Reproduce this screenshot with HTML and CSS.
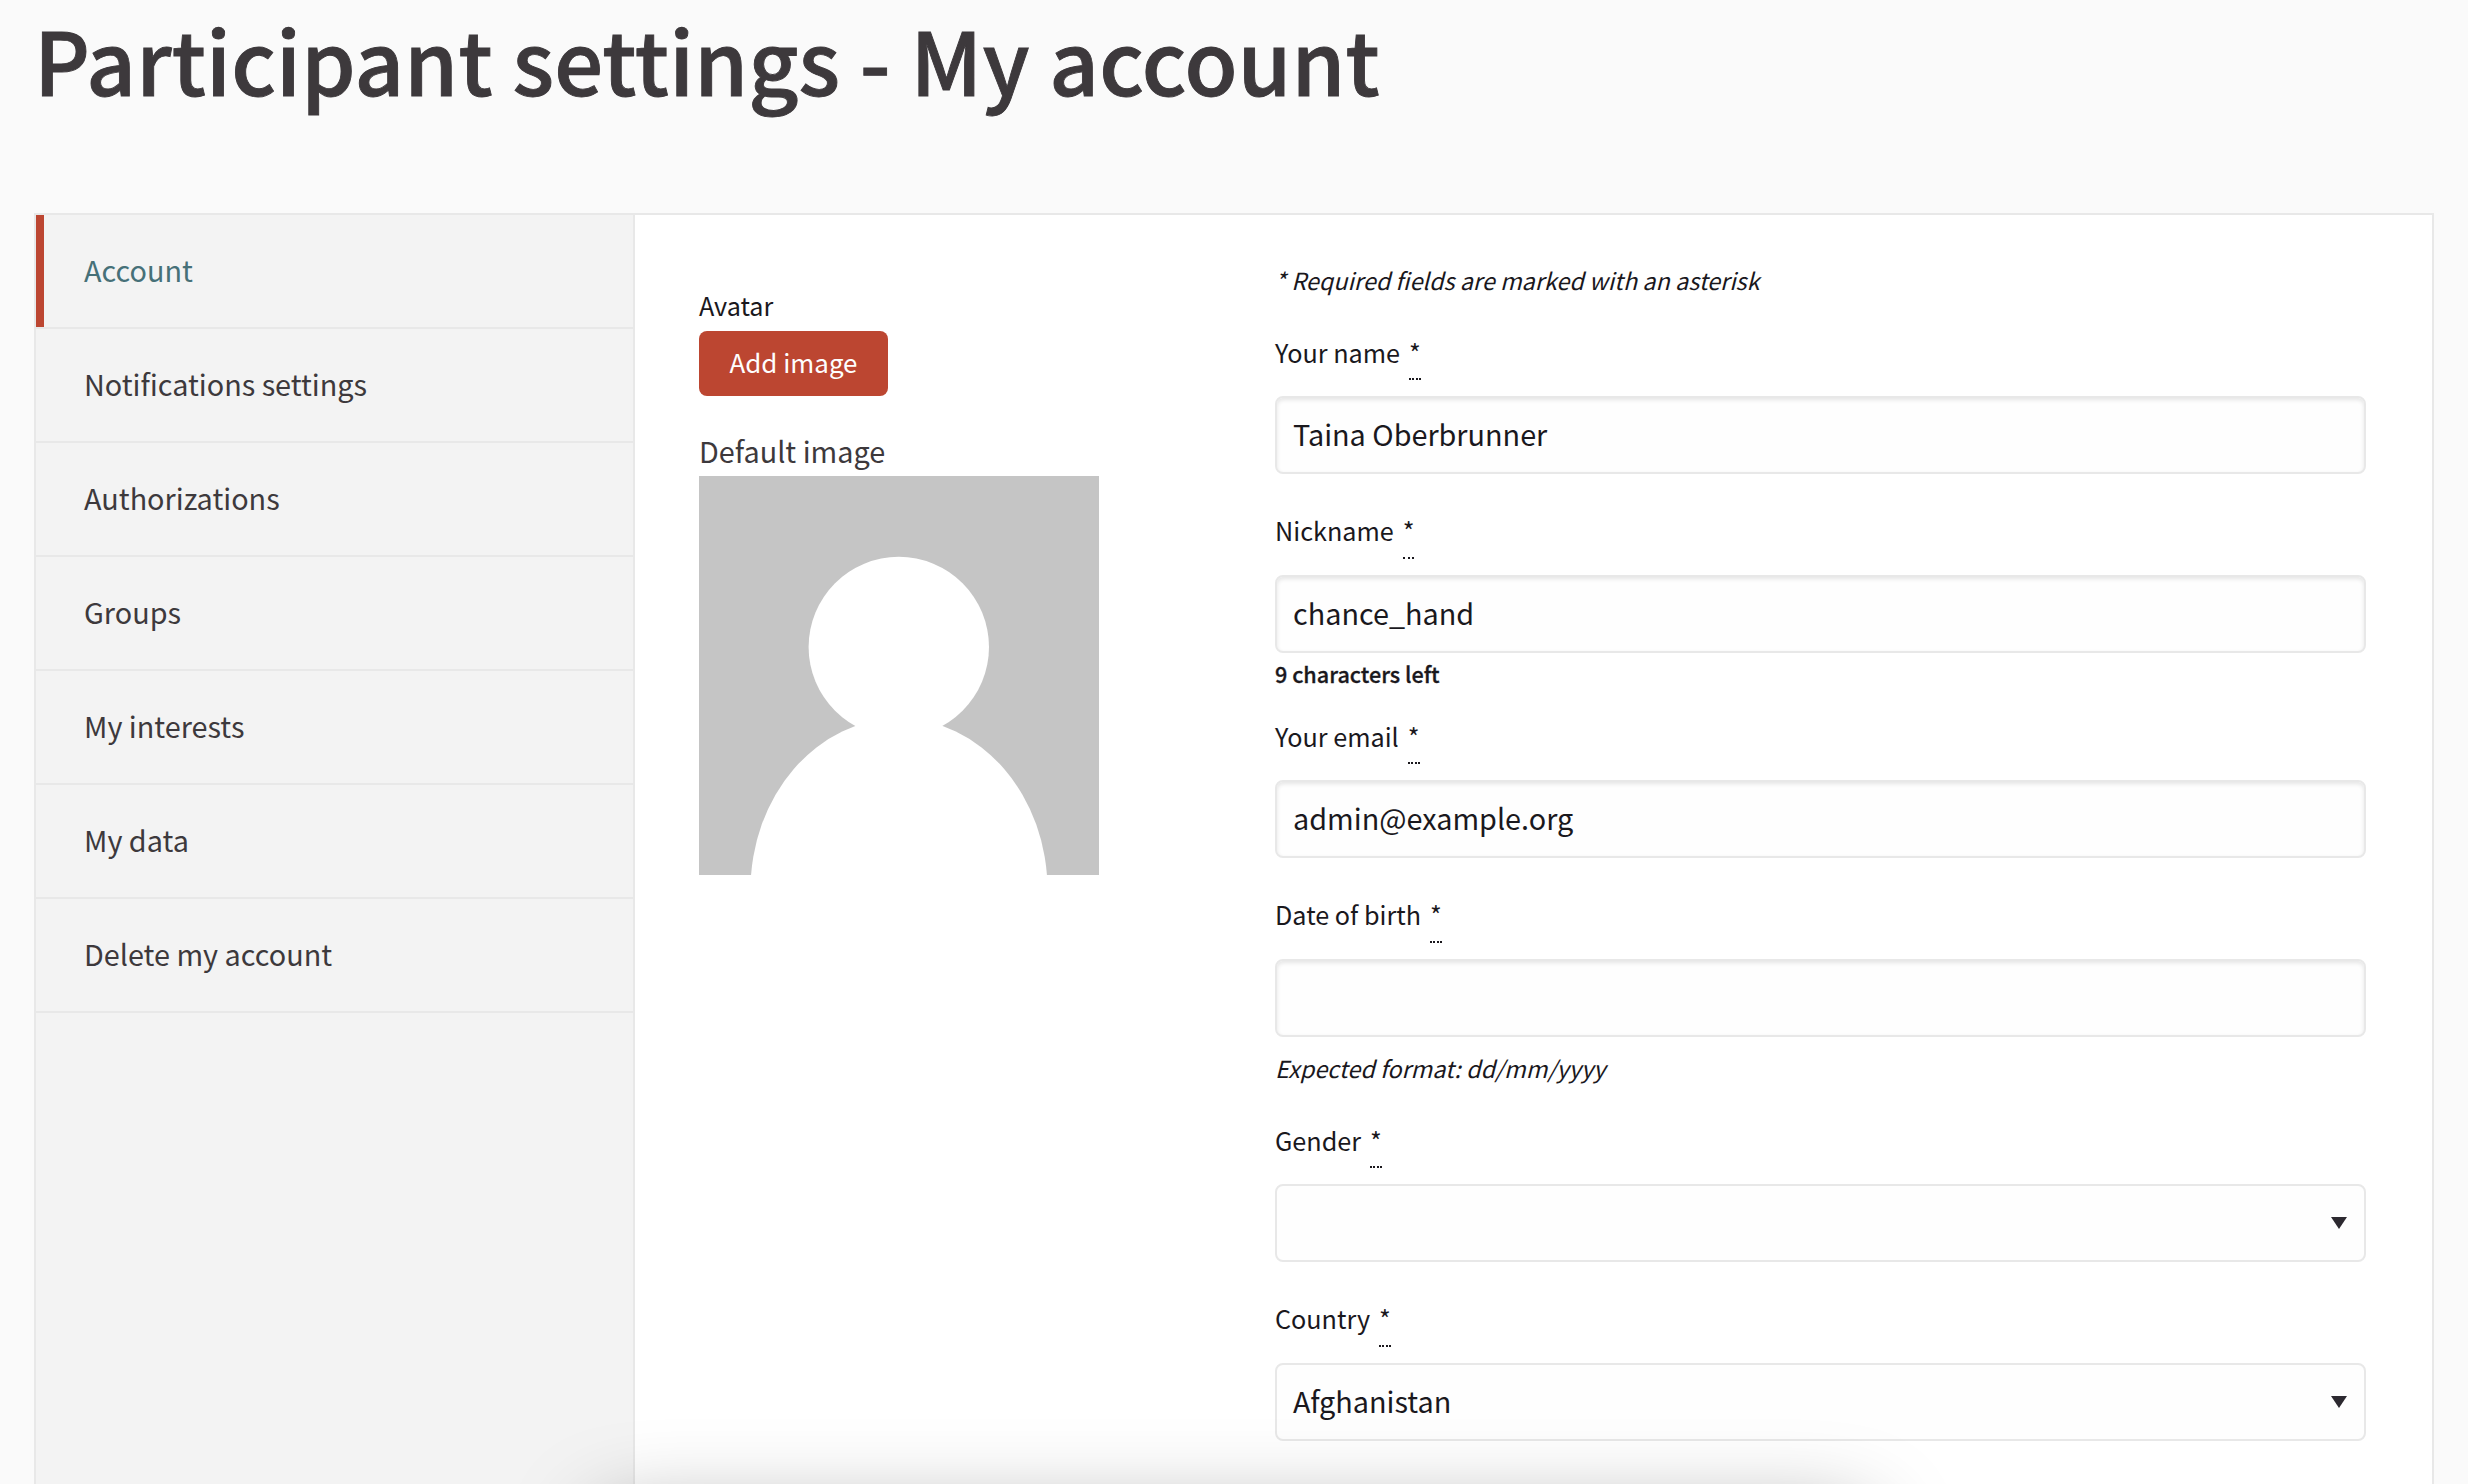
FILE: index.html
```html
<!DOCTYPE html>
<html lang="en">
<head>
<meta charset="utf-8">
<title>Participant settings - My account</title>
<link rel="stylesheet" href="styles.css">
</head>
<body>
<header class="page-header">
  <h1 class="page-title">Participant settings - My account</h1>
</header>
<main class="panel">
  <nav class="side-nav">
    <a class="side-link is-active">Account</a>
    <a class="side-link">Notifications settings</a>
    <a class="side-link">Authorizations</a>
    <a class="side-link">Groups</a>
    <a class="side-link">My interests</a>
    <a class="side-link">My data</a>
    <a class="side-link">Delete my account</a>
  </nav>
  <div class="content">
    <section class="avatar">
      <span class="avatar-label">Avatar</span>
      <button class="button" type="button">Add image</button>
      <span class="avatar-caption">Default image</span>
      <svg class="avatar-image" viewBox="0 0 400 399">
        <rect width="400" height="399" fill="#c5c5c5"/>
        <circle cx="199.8" cy="171" r="90.2" fill="#fff"/>
        <ellipse cx="200" cy="414" rx="148.5" ry="171.5" fill="#fff"/>
      </svg>
    </section>
    <form class="form">
      <p class="required-note">* Required fields are marked with an asterisk</p>
      <div class="field">
        <label class="label label-low" for="name">Your name <abbr class="mark">*</abbr></label>
        <input class="input" id="name" type="text" value="Taina Oberbrunner">
      </div>
      <div class="field field-counted">
        <label class="label" for="nick">Nickname <abbr class="mark">*</abbr></label>
        <input class="input" id="nick" type="text" value="chance_hand">
        <p class="counter">9 characters left</p>
      </div>
      <div class="field">
        <label class="label label-low" for="email">Your email <abbr class="mark">*</abbr></label>
        <input class="input" id="email" type="text" value="admin@example.org">
      </div>
      <div class="field field-help">
        <label class="label" for="birth">Date of birth <abbr class="mark">*</abbr></label>
        <input class="input" id="birth" type="text">
        <p class="help">Expected format: dd/mm/yyyy</p>
      </div>
      <div class="field">
        <label class="label label-low">Gender <abbr class="mark">*</abbr></label>
        <div class="select"><span></span><svg class="caret" viewBox="0 0 16 12"><path d="M0 0h16L8 12z"/></svg></div>
      </div>
      <div class="field field-last">
        <label class="label">Country <abbr class="mark">*</abbr></label>
        <div class="select"><span>Afghanistan</span><svg class="caret" viewBox="0 0 16 12"><path d="M0 0h16L8 12z"/></svg></div>
      </div>
    </form>
  </div>
</main>
<div class="bottom-edge"><div class="bottom-shadow"></div></div>
</body>
</html>
```
FILE: styles.css
```css
* { box-sizing: border-box; }

body {
  margin: 0;
  height: 1484px;
  overflow: hidden;
  position: relative;
  display: flex;
  flex-direction: column;
  background: #fafafa;
  color: #3d393c;
  font-family: "Noto Sans CJK SC", "Noto Sans", sans-serif;
  font-size: 28.8px;
}

p { margin: 0; }

.page-header { flex: none; height: 213px; padding: 0 34px; }

.page-title {
  margin: 0;
  font-size: 86.4px;
  line-height: 118px;
  font-weight: 500;
  letter-spacing: 0.2px;
  -webkit-text-stroke: 0.9px #3d393c;
}

.panel {
  flex: 1;
  display: flex;
  width: 2400px;
  margin-left: 34px;
  border: 2px solid #e8e8e8;
  border-bottom: 0;
  background: #fff;
}

.side-nav {
  flex: none;
  width: 599px;
  background: #f3f3f3;
  border-right: 2px solid #e8e8e8;
}

.side-link {
  display: block;
  height: 114px;
  padding-left: 48px;
  border-bottom: 2px solid #e8e8e8;
  line-height: 109px;
}

.side-link.is-active {
  color: #467078;
  background: linear-gradient(#bc4631, #bc4631) 0 0 / 8px 112px no-repeat;
}

.content { flex: 1; display: flex; justify-content: space-between; padding: 0 66px 0 64px; }

.avatar {
  width: 400px;
  padding-top: 70px;
  display: flex;
  flex-direction: column;
  align-items: flex-start;
}

.avatar-label { font-size: 25.2px; line-height: 40px; height: 46px; color: #1a181d; }

.button {
  width: 189px;
  height: 65px;
  padding: 0 0 4px;
  border: 0;
  border-radius: 8px;
  background: #bc4631;
  color: #fefefe;
  font-family: inherit;
  font-size: 25.9px;
  line-height: 61px;
}

.avatar-caption { margin-top: 31px; height: 49px; line-height: 48px; }

.avatar-image { display: block; width: 400px; height: 399px; }

.form { width: 1091px; padding-top: 40px; color: #1a181d; }

.required-note {
  height: 74px;
  line-height: 50px;
  font-size: 23.4px;
  font-style: italic;
}

.field { margin-bottom: 34px; }
.field-counted { margin-bottom: 21px; }
.field-help { margin-bottom: 18px; }
.field-last { margin-bottom: 0; }

.label {
  display: flex;
  align-items: flex-start;
  gap: 9px;
  height: 67px;
  font-size: 25.2px;
  line-height: 45px;
}

.mark { padding-bottom: 4px; border-bottom: 2px dotted #1a181d; text-decoration: none; }

.label-low { line-height: 47px; }
.label-low .mark { padding-bottom: 2px; }

.input,
.select {
  display: flex;
  justify-content: space-between;
  align-items: center;
  width: 100%;
  height: 78px;
  padding: 0 17px 4px 16px;
  border: 2px solid #e8e8e8;
  border-radius: 8px;
  background: #fefefe;
  color: #1a181d;
  font: inherit;
}

.input { outline: 0; box-shadow: inset 0 2px 4px rgba(10, 10, 10, 0.1); }

.caret { width: 16px; height: 12px; margin-top: 4px; fill: #2c2930; }

.counter {
  height: 39px;
  line-height: 41px;
  font-size: 21.6px;
  font-weight: 500;
  -webkit-text-stroke: 0.3px #1a181d;
}

.help { height: 62px; line-height: 62px; font-size: 23.4px; font-style: italic; }

/* Shadow cast upward from below the fold */
.bottom-edge {
  position: absolute;
  left: 0;
  right: 0;
  bottom: 0;
  height: 140px;
  overflow: hidden;
  pointer-events: none;
}

.bottom-shadow {
  width: 1270px;
  height: 200px;
  margin: 172px 0 0 598px;
  border-radius: 20px;
  box-shadow: 0 0 88px rgba(0, 0, 0, 0.38);
}
```
